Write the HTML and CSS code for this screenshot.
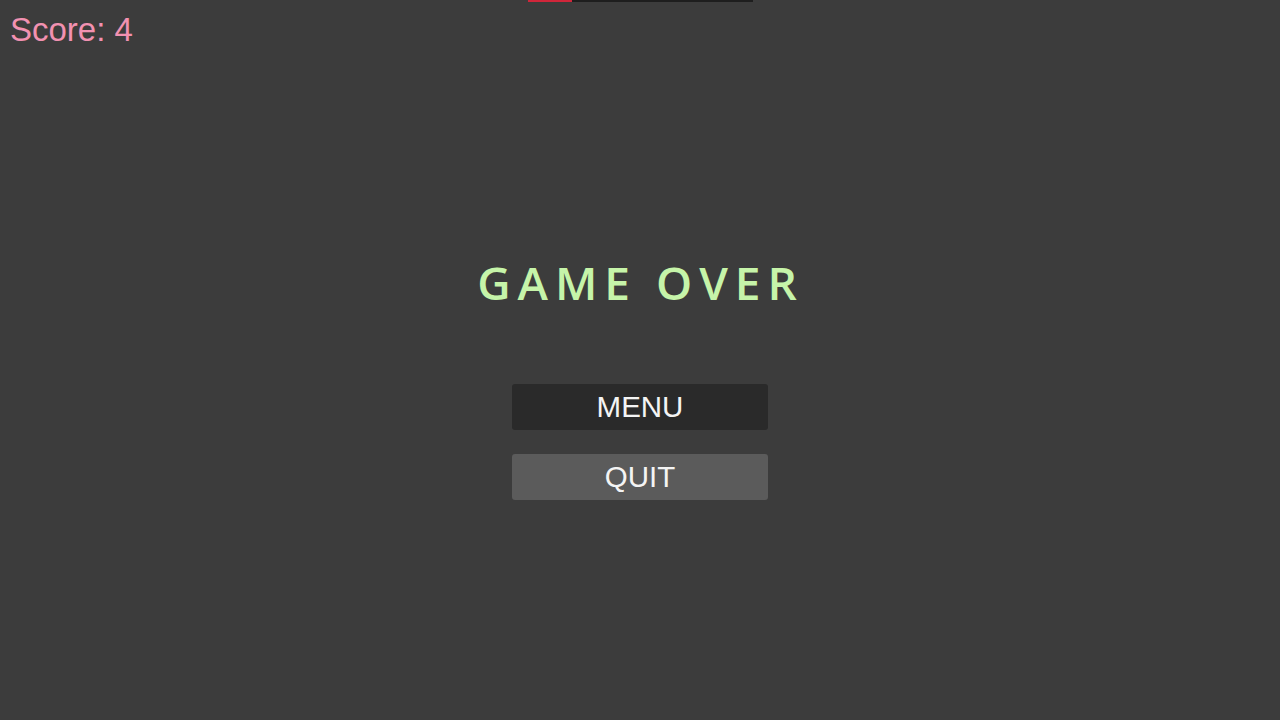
FILE: index.html
```html
<!DOCTYPE html>
<html lang="en">
<head>
    <meta charset="UTF-8">
    <meta name="viewport" content="width=device-width, initial-scale=1.0">
    <title>Game Over</title>
    <link rel="stylesheet" href="styles.css">
</head>
<body>
    <div class="healthbar">
        <div class="health-fill"></div>
    </div>

    <div class="score">Score: 4</div>

    <div class="game-over">
        <h1 class="title">GAME OVER</h1>
        <div class="buttons">
            <button class="btn btn-menu">MENU</button>
            <button class="btn btn-quit">QUIT</button>
        </div>
    </div>
</body>
</html>
```

FILE: styles.css
```css
* {
    margin: 0;
    padding: 0;
    box-sizing: border-box;
    font-family: "Liberation Sans", Arial, sans-serif;
}
body {
    background: #3c3c3c;
    width: 1280px;
    height: 720px;
    overflow: hidden;
    position: relative;
}
/* health bar stuck at the top edge */
.healthbar {
    position: absolute;
    top: 0;
    left: 528px;
    width: 225px;
    height: 2px;
    background: #1e1e1e;
}
.health-fill {
    width: 44px;
    height: 100%;
    background: #d0263a;
}
.score {
    padding: 11px 0 0 10px;
    color: #f291b1;
    font-size: 33px;
    line-height: 37px;
}
.game-over {
    display: flex;
    flex-direction: column;
    align-items: center;
    margin-top: 212px;
}
.title {
    font-family: "Open Sans", sans-serif;
    font-weight: 600;
    font-size: 46px;
    line-height: 45px;
    letter-spacing: 7px;
    padding-left: 1px;
    color: #c6f4a9;
}
.buttons {
    display: flex;
    flex-direction: column;
    gap: 24px;
    margin-top: 79px;
}
.btn {
    width: 256px;
    height: 46px;
    border: none;
    border-radius: 3px;
    color: #f4f4f4;
    font-size: 29.5px;
    line-height: 46px;
    cursor: pointer;
}
.btn-menu {
    background: #2a2a2a;
}
.btn-quit {
    background: #5b5b5b;
}
```
